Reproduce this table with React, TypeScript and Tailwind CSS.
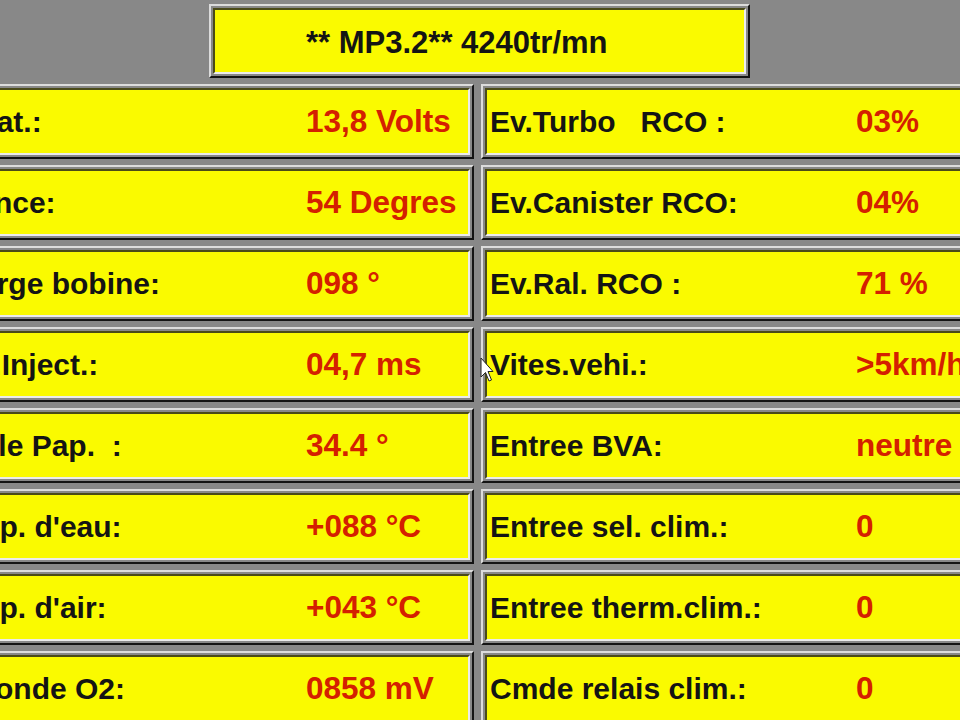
import { Fragment } from "react";

const rows: { label: string; value: string }[][] = [
  [
    { label: "U. bat.:", value: "13,8 Volts" },
    { label: "Ev.Turbo   RCO :", value: "03%" },
  ],
  [
    { label: "Avance:", value: "54 Degres" },
    { label: "Ev.Canister RCO:", value: "04%" },
  ],
  [
    { label: "Charge bobine:", value: "098 °" },
    { label: "Ev.Ral. RCO :", value: "71 %" },
  ],
  [
    { label: "Tps.Inject.:", value: "04,7 ms" },
    { label: "Vites.vehi.:", value: ">5km/h" },
  ],
  [
    { label: "Angle Pap.  :", value: "34.4 °" },
    { label: "Entree BVA:", value: "neutre" },
  ],
  [
    { label: "Temp. d'eau:", value: "+088 °C" },
    { label: "Entree sel. clim.:", value: "0" },
  ],
  [
    { label: "Temp. d'air:", value: "+043 °C" },
    { label: "Entree therm.clim.:", value: "0" },
  ],
  [
    { label: "U. sonde O2:", value: "0858 mV" },
    { label: "Cmde relais clim.:", value: "0" },
  ],
];

function Frame({ className, children }: { className: string; children: React.ReactNode }) {
  return (
    <div
      className={`border-2 border-t-[#dcdcdc] border-l-[#dcdcdc] border-b-[#141414] border-r-[#141414] bg-[#888888] p-[2px] ${className}`}
    >
      <div className="h-full border-2 border-t-[#4a4a18] border-l-[#4a4a18] border-b-[#ececec] border-r-[#ececec] bg-[#fafa00] flex items-center overflow-hidden">
        {children}
      </div>
    </div>
  );
}

function Cell({ label, value }: { label: string; value: string }) {
  return (
    <Frame className="h-[75px]">
      <span className="w-[369px] shrink-0 pl-[3px] whitespace-pre text-[#141414]">{label}</span>
      <span className="whitespace-pre text-[31.5px] text-[#d42000]">{value}</span>
    </Frame>
  );
}

export default function App() {
  return (
    <div
      className="relative w-[960px] h-[720px] overflow-hidden bg-[#888888] pt-[4px] font-bold text-[30px] leading-none"
      style={{ fontFamily: '"Liberation Sans", Arial, sans-serif' }}
    >
      <Frame className="ml-[209px] w-[541px] h-[74px]">
        <span className="pl-[91px] pt-[2px] whitespace-pre text-[31px] text-[#141414]">** MP3.2** 4240tr/mn</span>
      </Frame>
      <div className="mt-[6px] ml-[-69px] w-[1093px] grid grid-cols-[543px_543px] gap-x-[7px] gap-y-[6px]">
        {rows.map((r, i) => (
          <Fragment key={i}>
            <Cell label={r[0].label} value={r[0].value} />
            <Cell label={r[1].label} value={r[1].value} />
          </Fragment>
        ))}
      </div>
      <svg className="absolute left-[480px] top-[357px]" width="14" height="26" viewBox="0 0 14 26">
        <path d="M1 1 L1 20 L5.5 15.5 L9 24 L11.5 23 L8 14.5 L13 14.5 Z" fill="#ffffff" stroke="#222222" strokeWidth="1" />
      </svg>
    </div>
  );
}
